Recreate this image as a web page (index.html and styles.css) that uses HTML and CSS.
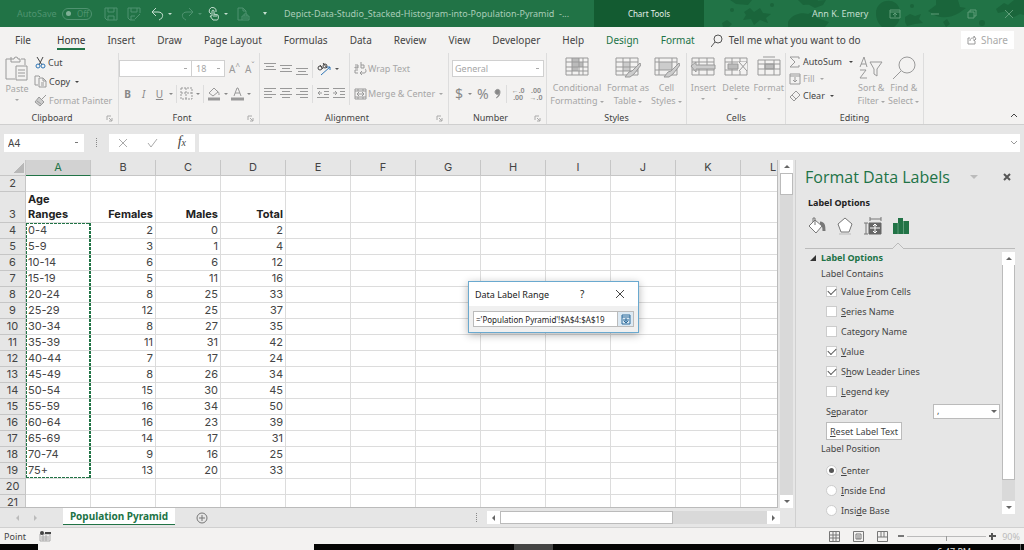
FILE: index.html
```html
<!DOCTYPE html>
<html lang="en">
<head>
<meta charset="utf-8">
<title>Depict-Data-Studio_Stacked-Histogram-into-Population-Pyramid</title>
<link rel="stylesheet" href="styles.css">
</head>
<body>
<div class="app">
  <header class="titlebar">
    <div class="quick">
      <span class="faint autosave">AutoSave</span>
      <span class="toggle"><i class="knob"></i>Off</span>
      <svg class="faint q1" width="14" height="14" viewBox="0 0 14 14"><path d="M1 1h12v12H3l-2-2zM4 1v4h6V1M4 13V9h6v4"/></svg>
      <svg class="faint q2" width="14" height="14" viewBox="0 0 14 14"><path d="M8 13H3l-2-2V1h12v5M4 1v4h6V1M4 13V9h4M8 12l5-5"/></svg>
      <svg class="lit q3" width="13" height="14" viewBox="0 0 13 14"><path d="M5 1 1 5l4 4M1 5h6c6 0 6 6 1 8"/></svg>
      <span class="caret lit"></span>
      <svg class="faint q4" width="13" height="14" viewBox="0 0 13 14"><path d="M8 1l4 4-4 4M12 5H6C0 5 0 11 5 13"/></svg>
      <span class="caret faint"></span>
      <svg class="lit q5" width="12" height="14" viewBox="0 0 12 14"><path d="M3 7a3.500 3.500 0 1 1 5-2M4 9V4c0-1 2-1 2 0v3l4 1c1 3 0 5-1 5H5L2 9h2M6 7v3M8 8v2"/></svg>
      <span class="caret lit"></span>
      <svg class="faint q6" width="13" height="14" viewBox="0 0 13 14"><path d="M5 13H1V1h5l3 3v3M6 1v3h3M5 9h7v4H5zM7 9V7h3v2M6 11h5"/></svg>
      <span class="caret bar lit"></span>
    </div>
    <div class="doc">Depict-Data-Studio_Stacked-Histogram-into-Population-Pyramid&nbsp; -...</div>
    <div class="tools">Chart Tools</div>
    <div class="account">
      <svg class="art" width="348" height="27" viewBox="0 0 348 27" aria-hidden="true">
        <g fill="#1a653b"><path d="M50 0h22l-4 5-12-1zM64 12l6-4 4 4 6-4 3 5 8 1-5 4 2 5-8-3-6 5-3-6-8 1 3-5zM108 22c4-8 14-10 20-8l6-3 3 7 12 4-4 5h-37zM118 0h20l-3 4-12 1zM124 2l22-2-3 5-8 3zM42 23l5-3 5 4-3 3h-6zM196 13c0-15 22-17 24-2 1 8-2 13-6 16h-12c-4-4-6-8-6-14zM225 17l5-3 5 2 6-2-2 5 4 4-8 1-8 2-2-4zM248 11l8-6 0-5h22l2 7 6 1-7 5c-8 5-20 6-26 1zM316 9l8-6 4 2 6-5h14v16l-8-2-8 4-5-7-9 2zM263 22l4-3 3 5-4 3z"/><circle cx="52" cy="10" r="2"/><circle cx="232" cy="6" r="2"/><circle cx="92" cy="5" r="2"/><circle cx="302" cy="23" r="3"/></g>
      </svg>
      <span class="user">Ann K. Emery</span>
      <svg class="w1" width="12" height="10" viewBox="0 0 12 10"><path d="M1 1h10v8H1zM1 3h10M6 8V4M4 6l2-2 2 2"/></svg>
      <svg class="w2" width="10" height="10" viewBox="0 0 10 10"><path d="M1 5h8"/></svg>
      <svg class="w3" width="10" height="10" viewBox="0 0 10 10"><path d="M1 3h6v6H1zM3 3V1h6v6H7"/></svg>
      <svg class="w4" width="10" height="10" viewBox="0 0 10 10"><path d="M1 1l8 8M9 1L1 9"/></svg>
    </div>
  </header>

  <nav class="tabs">
    <a href="#" class="tab file">File</a><a href="#" class="tab on">Home</a><a href="#" class="tab">Insert</a><a href="#" class="tab">Draw</a><a href="#" class="tab">Page Layout</a><a href="#" class="tab">Formulas</a><a href="#" class="tab">Data</a><a href="#" class="tab">Review</a><a href="#" class="tab">View</a><a href="#" class="tab">Developer</a><a href="#" class="tab">Help</a><a href="#" class="tab green">Design</a><a href="#" class="tab green">Format</a>
    <span class="tell"><svg width="12" height="13" viewBox="0 0 12 13"><circle cx="7" cy="5" r="4"/><path d="M4 8l-4 5"/></svg>Tell me what you want to do</span>
    <button class="share"><svg width="10" height="10" viewBox="0 0 10 10"><path d="M3 3H1v6h7V6M3 6c0-3 2-3 4-3V1l2 3-2 2V4"/></svg>Share</button>
  </nav>

  <section class="ribbon">
    <div class="group clipboard">
      <div class="body">
        <button class="big dim paste"><svg width="24" height="26" viewBox="0 0 24 26"><path d="M6 3H1v20h9M16 3h4v6M6 1v5h9V3h-2a2 2 0 0 0-4 0H6M11 10h11v14H11zM13 14h7M13 17h7M13 20h7"/></svg><span>Paste</span><i class="caret"></i></button>
        <div class="stack">
          <button class="small"><svg width="12" height="13" viewBox="0 0 12 13"><path d="M3 1l5 8M9 1L5 9" stroke="#444"/><g stroke="#2e75b6"><circle cx="4" cy="10" r="2"/><circle cx="9" cy="10" r="2"/></g></svg>Cut</button>
          <button class="small"><svg width="13" height="13" viewBox="0 0 13 13" stroke="#444"><path d="M4 10H1V1h4l1 1M5 3h4l3 3v6H5zM9 3v3h3M7 8h3M7 10h3"/></svg>Copy <i class="caret"></i></button>
          <button class="small dim"><svg width="13" height="13" viewBox="0 0 13 13"><path d="M12 1L8 5M5 3l5 5-4 4-5-4zM3 7l4 3" fill="#ccc"/></svg>Format Painter</button>
        </div>
      </div>
      <div class="label">Clipboard<svg class="launch" width="7" height="7" viewBox="0 0 7 7"><path d="M1 5V1h4M3 3l3 3M6 3v3H3"/></svg></div>
    </div>
    <div class="group font">
      <div class="body rows">
        <div class="row"><select class="box face" aria-label="Font"><option></option></select><select class="box size" aria-label="Font size"><option>18</option></select><button class="fs">A<sup>^</sup></button><button class="fs fs2">A<sup>ˇ</sup></button></div>
        <div class="row fmt"><button><b>B</b></button><button><em>I</em></button><button><u>U</u></button><i class="caret"></i><i class="sep"></i>
          <button><svg width="13" height="13" viewBox="0 0 13 13"><path d="M1 1h11v11H1zM6 1v11M1 6h11" stroke-dasharray="2 1"/></svg></button><i class="caret"></i><i class="sep"></i>
          <button><svg width="14" height="14" viewBox="0 0 14 14"><path d="M7 1L2 6l4 3 5-4-4-4M10 4c2 1 2 2 2 4"/><path d="M1 12h12" stroke-width="3"/></svg></button><i class="caret"></i>
          <button><svg width="13" height="14" viewBox="0 0 13 14"><path d="M3 9l3-8h1l3 8M4 6h5"/><path d="M0 12h13" stroke-width="3"/></svg></button><i class="caret"></i></div>
      </div>
      <div class="label">Font<svg class="launch" width="7" height="7" viewBox="0 0 7 7"><path d="M1 5V1h4M3 3l3 3M6 3v3H3"/></svg></div>
    </div>
    <div class="group align">
      <div class="body">
        <div class="rows alignl">
          <div class="row"><svg width="12" height="12" viewBox="0 0 12 12"><path d="M0 .5h12M2 3.500h8M0 6.500h12"/></svg><svg width="12" height="12" viewBox="0 0 12 12"><path d="M0 2.500h12M2 5.500h8M0 8.500h12"/></svg><svg width="12" height="12" viewBox="0 0 12 12"><path d="M0 5.500h12M2 8.500h8M0 11.500h12"/></svg><i class="sep"></i><svg width="14" height="14" viewBox="0 0 14 14"><g stroke="#444"><circle cx="3" cy="6" r="2"/><path d="M3 3l3 4M6 1l4 5"/><circle cx="8" cy="4" r="2"/></g><path d="M4 13l9-8M10 5h3v3" stroke="#2e75b6"/></svg><i class="caret dark"></i></div>
          <div class="row"><svg width="12" height="12" viewBox="0 0 12 12"><path d="M0 .5h12M0 3.500h8M0 6.500h12M0 9.500h8"/></svg><svg width="12" height="12" viewBox="0 0 12 12"><path d="M0 .5h12M2 3.500h8M0 6.500h12M2 9.500h8"/></svg><svg width="12" height="12" viewBox="0 0 12 12"><path d="M0 .5h12M4 3.500h8M0 6.500h12M4 9.500h8"/></svg><i class="sep"></i><svg width="12" height="12" viewBox="0 0 12 12"><path d="M0 .5h12M7 3.500h5M7 6.500h5M0 9.500h12M5 5H1M3 3L1 5l2 2"/></svg><svg width="12" height="12" viewBox="0 0 12 12"><path d="M0 .5h12M7 3.500h5M7 6.500h5M0 9.500h12M0 5h4M2 3l2 2-2 2"/></svg></div>
        </div>
        <div class="rows alignr">
          <button class="small dim"><svg width="13" height="13" viewBox="0 0 13 13"><path d="M1 3h3v3H1V5h3M7 0v6h3V3H7M4 8H1v3h3M7 11h3c3 0 2-4 1-4M8 9l-2 2 2 2"/></svg>Wrap Text</button>
          <button class="small dim"><svg width="13" height="12" viewBox="0 0 13 12"><path d="M1 1h11v10H1zM1 3h11M1 9h11M4 1v2M9 1v2M4 9v2M9 9v2M3 6h7M5 4L3 6l2 2M8 4l2 2-2 2"/></svg>Merge &amp; Center <i class="caret"></i></button>
        </div>
      </div>
      <div class="label">Alignment<svg class="launch" width="7" height="7" viewBox="0 0 7 7"><path d="M1 5V1h4M3 3l3 3M6 3v3H3"/></svg></div>
    </div>
    <div class="group number">
      <div class="body rows">
        <div class="row"><select class="box general" aria-label="Number format"><option>General</option></select></div>
        <div class="row sym"><button>$</button><i class="caret"></i><button>%</button><button class="comma"><svg width="7" height="11" viewBox="0 0 7 11"><path d="M2 10c3-1 4-4 4-6 0-4-5-3-5 0 0 2 2 3 4 2" fill="#888"/></svg></button><i class="sep"></i><button class="dec"><span>←.0</span><span>.00</span></button><button class="dec"><span>.00</span><span>→.0</span></button></div>
      </div>
      <div class="label">Number<svg class="launch" width="7" height="7" viewBox="0 0 7 7"><path d="M1 5V1h4M3 3l3 3M6 3v3H3"/></svg></div>
    </div>
    <div class="group styles">
      <div class="body">
        <button class="big dim s1"><svg width="24" height="22" viewBox="0 0 24 22"><path d="M7 2h7v4H7zM7 6h11v5H7zM7 11h6v4H7z" fill="#bbb" stroke="none"/><path d="M1 2h22v17H1zM7 2v17M14 2v17M18 2v17M1 6h22M1 11h22M1 15h22"/></svg><span>Conditional<br>Formatting <i class="caret"></i></span></button>
        <button class="big dim s2"><svg width="26" height="22" viewBox="0 0 26 22"><path d="M8 6h7v9H8z" fill="#ccc" stroke="none"/><path d="M1 2h22v17H1zM8 2v17M15 2v17M1 6h22M1 11h22M1 15h22"/><path d="M25 7l-8 8-3 1-4 5h5l4-3 7-9z" fill="#ccc"/></svg><span>Format as<br>Table <i class="caret"></i></span></button>
        <button class="big dim s3"><svg width="26" height="22" viewBox="0 0 26 22"><path d="M5 6h13v8H5z" fill="#ccc" stroke="none"/><path d="M1 2h22v17H1zM5 2v17M18 2v17M1 6h22M1 14h22"/><path d="M25 7l-8 8-3 1-4 5h5l4-3 7-9z" fill="#ccc"/></svg><span>Cell<br>Styles <i class="caret"></i></span></button>
      </div>
      <div class="label">Styles</div>
    </div>
    <div class="group cells">
      <div class="body">
        <button class="big dim"><svg width="26" height="22" viewBox="0 0 26 22"><path d="M2 2h22v17H2zM9 2v17M17 2v17M2 6h22M2 14h22"/><path d="M1 10l5-4v3h19v4H6v3z" fill="#ccc"/></svg><span>Insert</span><i class="caret"></i></button>
        <button class="big dim"><svg width="26" height="22" viewBox="0 0 26 22"><path d="M2 2h22v17H2zM9 2v17M17 2v17M2 6h22M2 14h22"/><path d="M15 6h9v9h-9z" fill="#f3f2f1" stroke="none"/><path d="M5 8h10v5H5z" fill="#bbb"/><path d="M16 6l8 9M24 6l-8 9"/></svg><span>Delete</span><i class="caret"></i></button>
        <button class="big dim"><svg width="24" height="22" viewBox="0 0 24 22"><path d="M8 8h9v5H8z" fill="#bbb"/><path d="M1 4h22v15H1zM8 4v15M17 4v15M1 8h22M1 13h22M6 1h12"/></svg><span>Format</span><i class="caret"></i></button>
      </div>
      <div class="label">Cells</div>
    </div>
    <div class="group editing">
      <div class="body">
        <div class="stack ed">
          <button class="small sum"><svg width="12" height="12" viewBox="0 0 12 12" stroke="#444"><path d="M10 3V1H1l5 5-5 5h9V9"/></svg>AutoSum <i class="caret"></i></button>
          <button class="small dim"><svg width="12" height="12" viewBox="0 0 12 12"><path d="M1 1h10v10H1zM1 3h10M6 4v5M4 7l2 2 2-2"/></svg>Fill <i class="caret"></i></button>
          <button class="small"><svg width="12" height="12" viewBox="0 0 12 12" stroke="#444"><path d="M1 7l6-6 4 4-6 6zM3 5l4 4"/></svg>Clear <i class="caret"></i></button>
        </div>
        <button class="big dim"><svg width="24" height="24" viewBox="0 0 24 24"><path d="M1 11l4-10 3 10M2 8h5M1 14h6l-6 8h7M11 6h12l-5 7v7l-3-2v-5z"/></svg><span>Sort &amp;<br>Filter <i class="caret"></i></span></button>
        <button class="big dim"><svg width="24" height="24" viewBox="0 0 24 24"><circle cx="15" cy="9" r="8"/><path d="M9 15l-8 8"/></svg><span>Find &amp;<br>Select <i class="caret"></i></span></button>
      </div>
      <div class="label">Editing</div>
    </div>
    <button class="collapse" aria-label="Collapse ribbon"><svg width="8" height="6" viewBox="0 0 8 6"><path d="M1 5l3-3 3 3" stroke="#444"/></svg></button>
  </section>

  <section class="formula">
    <select class="namebox" aria-label="Name box"><option>A4</option></select>
    <span class="dots"></span>
    <div class="fx"><svg width="10" height="10" viewBox="0 0 10 10"><path d="M1 1l8 8M9 1L1 9"/></svg><svg width="11" height="10" viewBox="0 0 11 10"><path d="M1 5l3 4 6-8"/></svg><span><em>f</em><small>x</small></span></div>
    <input class="fbar" aria-label="Formula bar">
    <svg class="expand" width="8" height="6" viewBox="0 0 8 6"><path d="M1 1l3 3 3-3"/></svg>
  </section>

  <main class="work">
    <div class="book">
      <div class="gridwrap">
        <div class="sheet"><table class="cellsheet" id="cells"></table></div>
        <div class="vbar"><i class="sb up"></i><i class="thumb"></i><i class="sb down"></i></div>
      </div>
      <div class="sheettabs">
        <span class="nav"><i class="tri l"></i><i class="tri r"></i></span>
        <a href="#" class="sheettab">Population Pyramid</a>
        <button class="add" aria-label="New sheet"><svg width="12" height="12" viewBox="0 0 12 12"><circle cx="6" cy="6" r="5"/><path d="M3 6h6M6 3v6"/></svg></button>
        <span class="dots"></span>
        <div class="hbar"><i class="sb left"></i><i class="thumb"></i><i class="sb right"></i></div>
      </div>
    </div>
    <aside class="pane">
      <div class="panehead"><h1>Format Data Labels</h1><i class="caret"></i><button aria-label="Close"><svg width="8" height="8" viewBox="0 0 8 8"><path d="M1 1l6 6M7 1L1 7" stroke="#555" stroke-width="2"/></svg></button></div>
      <h2>Label Options</h2>
      <div class="picks">
        <svg width="18" height="18" viewBox="0 0 18 18"><path d="M7 3l7 6-6 7-7-7z" fill="#fff"/><path d="M7 8V1H5v4"/><path d="M12 6c4 0 4 4 4 8" stroke-width="3"/></svg>
        <svg width="18" height="18" viewBox="0 0 18 18"><path d="M9 1l7 6-3 8H5L2 7z" fill="#fff"/><path d="M3 17h12" stroke="#bbb"/></svg>
        <svg width="18" height="18" viewBox="0 0 18 18"><path d="M6 2h11M6 0v4M17 0v4M2 6v11M0 6h4M0 17h4"/><path d="M5 6h12v11H5z" fill="#666" stroke="#666"/><path d="M11 7v9M6 11h10M9 9l2-2 2 2M9 14l2 2 2-2" stroke="#fff"/></svg>
        <svg width="18" height="18" viewBox="0 0 18 18"><path d="M1 6h5v11H1zM6 1h5v16H6zM12 4h5v13h-5z" fill="#217346" stroke="none"/><path d="M6 6v11M11.500 4v13" stroke="#5c9c78"/></svg>
      </div>
      <div class="rule"><svg width="12" height="7" viewBox="0 0 12 7"><path d="M0 7l6-6 6 6" fill="#e6e6e6" stroke="#bbb"/></svg></div>
      <div class="panebody">
        <form class="opts">
          <h3><svg width="6" height="6" viewBox="0 0 6 6"><path d="M6 0v6H0z" fill="#333" stroke="none"/></svg>Label Options</h3>
          <p>Label Contains</p>
          <label><input type="checkbox" checked><span>Value <u>F</u>rom Cells</span></label>
          <label><input type="checkbox"><span><u>S</u>eries Name</span></label>
          <label><input type="checkbox"><span>Cate<u>g</u>ory Name</span></label>
          <label><input type="checkbox" checked><span><u>V</u>alue</span></label>
          <label><input type="checkbox" checked><span>S<u>h</u>ow Leader Lines</span></label>
          <label><input type="checkbox"><span><u>L</u>egend key</span></label>
          <div class="sepline"><label for="sep">S<u>e</u>parator</label><span class="drop"><select id="sep"><option>,</option></select></span></div>
          <button type="button" class="reset"><u>R</u>eset Label Text</button>
          <p class="pos">Label Position</p>
          <label><input type="radio" name="pos" checked><span><u>C</u>enter</span></label>
          <label><input type="radio" name="pos"><span><u>I</u>nside End</span></label>
          <label><input type="radio" name="pos"><span>Insi<u>d</u>e Base</span></label>
        </form>
        <div class="vbar panebar"><i class="sb up"></i><i class="thumb"></i><i class="sb down"></i></div>
      </div>
    </aside>
    <div class="dialog" role="dialog" aria-label="Data Label Range">
      <div class="dhead"><span>Data Label Range</span><button class="q">?</button><button aria-label="Close"><svg width="10" height="10" viewBox="0 0 10 10"><path d="M1 1l8 8M9 1L1 9" stroke="#444"/></svg></button></div>
      <div class="dbody"><div class="field"><input aria-label="Range" value="='Population Pyramid'!$A$4:$A$19"><button aria-label="Expand dialog"><svg width="10" height="11" viewBox="0 0 10 11"><path d="M1 1h8v9H1zM1 3h8M5 4v5M3 7l2 2 2-2M2 6h6" stroke="#2b6a9b"/></svg></button></div></div>
    </div>
  </main>

  <footer class="status">
    <span>Point</span>
    <svg width="12" height="11" viewBox="0 0 12 11"><path d="M1 3h10v7H1zM2 6h8M2 8h8M4 4v6M7 4v6" stroke="#aaa"/><circle cx="3" cy="2" r="2" fill="#444" stroke="none"/><path d="M6 2h6" stroke="#444" stroke-width="2"/></svg>
    <span class="fill"></span>
    <svg width="11" height="11" viewBox="0 0 11 11"><path d="M.5.5h10v10H.5zM4 1v9M7 1v9M1 4h9M1 7h9"/></svg>
    <svg width="11" height="11" viewBox="0 0 11 11"><path d="M.5.5h10v10H.5zM3 3h5v5H3zM4 5h3M4 7h3"/></svg>
    <svg width="11" height="11" viewBox="0 0 11 11"><path d="M.5.5h10v10H.5zM4 1v5M7 1v5M1 6h9"/></svg>
    <span class="zoomer"><i class="minus"></i><i class="track"><i class="knob"></i></i><svg width="7" height="7" viewBox="0 0 7 7"><path d="M0 3h7M3 0v7" stroke="#555" stroke-width="2"/></svg></span>
    <span class="pct">90%</span>
  </footer>
  <div class="taskbar"><span class="start"></span><span class="search"></span><span class="gap"></span><span class="active"></span><span class="clock">6:47 PM</span><span class="peek"></span></div>
</div>
<script src="sheet.js"></script>
</body>
</html>
```
FILE: styles.css
```css
* { box-sizing: border-box; }
body { margin: 0; font-family: "Noto Sans", "Open Sans", sans-serif; font-size: 9px; color: #444; background: #e6e6e6; }
.app { display: flex; flex-direction: column; height: 100vh; overflow: hidden; }
svg { fill: none; stroke: #999; flex: none; }
button { border: 0; padding: 0; background: none; font: inherit; color: inherit; }
input, select { font: inherit; color: inherit; border-radius: 0; }
select { appearance: none; }
a { color: inherit; text-decoration: none; }
.caret { display: inline-block; flex: none; border: 2px solid transparent; border-top-color: currentColor; border-bottom: 0; vertical-align: middle; }
.sep { width: 1px; height: 18px; background: #ddd; }

/* Title bar */
.titlebar { display: flex; height: 27px; flex: none; background: #217346; color: #a9cdb8; align-items: center; }
.quick { width: 284px; display: flex; align-items: center; padding-left: 17px; }
.quick .faint, .quick .toggle { color: #4f9370; stroke: #4f9370; }
.quick .lit { color: #c5dfd0; stroke: #c5dfd0; }
.autosave { width: 45px; }
.toggle { display: flex; align-items: center; gap: 6px; width: 30px; height: 12px; border: 1px solid #4f9370; border-radius: 6px; padding-left: 3px; line-height: 10px; font-size: 8px; }
.toggle .knob { width: 5px; height: 5px; border-radius: 50%; background: #7fb096; }
.q1 { margin-left: 12px; }
.q2 { margin-left: 9px; }
.q3 { margin: 0 4px 0 10px; }
.q4 { margin: 0 4px 0 9px; }
.q5 { margin: 0 4px 0 6px; }
.q6 { margin: 0 13px 0 9px; }
.bar { border-top-width: 3px; }
.doc { flex: 1; white-space: nowrap; }
.tools { width: 110px; align-self: stretch; background: #135b31; color: #e4f0e9; display: grid; place-items: center; font-size: 8px; }
.account { position: relative; width: 320px; align-self: stretch; display: flex; align-items: center; overflow: hidden; padding-left: 108px; }
.account > * { position: relative; }
.account .art { position: absolute; left: -24px; top: 0; }
.account svg { stroke: #5f9d79; }
.account .art { stroke: none; }
.user { width: 77px; color: #c5dfd0; white-space: nowrap; }
.w2 { margin-left: 29px; }
.w3 { margin-left: 27px; }
.w4 { margin-left: 27px; }

/* Ribbon tabs */
.tabs { display: flex; flex: none; height: 26px; background: #f3f2f1; padding-left: 15px; font-size: 10px; align-items: center; gap: 22px; white-space: nowrap; }
.tab { line-height: 15px; }
.file { margin-right: 4px; }
.on { box-shadow: 0 2px #217346; color: #333; }
.green { color: #217346; }
.tell { display: flex; gap: 6px; align-items: center; margin-left: -6px; }
.tell svg { stroke: #555; }
.share { margin-left: auto; margin-right: 10px; width: 53px; height: 18px; background: #fff; color: #aaa; display: flex; align-items: center; justify-content: center; gap: 4px; }

/* Ribbon */
.ribbon { display: flex; flex: none; height: 72px; background: #f3f2f1; border-bottom: 1px solid #cfcfcf; }
.group { display: flex; flex-direction: column; border-right: 1px solid #ddd; flex: none; }
.clipboard { width: 119px; }
.font { width: 141px; }
.align { width: 189px; }
.number { width: 98px; }
.styles { width: 140px; }
.cells { width: 99px; }
.editing { width: 138px; }
.body { display: flex; height: 57px; }
.label { position: relative; line-height: 16px; height: 14px; padding-right: 14px; text-align: center; }
.styles .label, .cells .label, .editing .label { padding-right: 0; }
.launch { position: absolute; right: 5px; top: 5px; stroke: #aaa; }
.dim { color: #a6a6a6; }
.big { display: flex; flex-direction: column; align-items: center; line-height: 13px; padding-top: 3px; white-space: nowrap; }
.big svg { margin-bottom: 3px; }
.editing .big svg { margin-bottom: 1px; }
.big > .caret { margin-top: 4px; }
.paste { width: 34px; }
.clipboard .paste svg { margin-bottom: 0; }
.stack { display: flex; flex-direction: column; height: 57px; }
.small { display: flex; align-items: center; gap: 2px; flex: 1; white-space: nowrap; }
.small .caret { margin-left: 3px; }
.rows { display: flex; flex-direction: column; padding-top: 3px; }
.row, .alignr .small { display: flex; align-items: center; height: 25px; flex: none; }
.box { border: 1px solid #d0d0d0; height: 17px; background: #fff linear-gradient(#aaa, #aaa) no-repeat right 4px center / 3px 1px; padding: 0 4px; color: #a6a6a6; }
.face { width: 72px; border-right: 0; }
.size { width: 34px; }
.fs { margin-left: 4px; color: #999; line-height: 12px; font-size: 10px; }
.fs2 { margin-left: 5px; }
.fs sup { font-size: 8px; line-height: 0; }
.fmt { gap: 3px; color: #888; padding-left: 2px; font-size: 10px; }
.fmt button { min-width: 13px; display: grid; place-items: center; }
.align .row { gap: 4px; }
.alignl { flex: none; width: 90px; padding-left: 4px; border-right: 1px solid #ddd; height: 52px; }
.alignr { padding-left: 4px; }
.alignr .small { gap: 1px; }
.dark { color: #555; }
.number .body { padding-left: 3px; }
.general { width: 92px; padding: 0 2px; }
.sym { gap: 5px; font-size: 14px; color: #888; padding-left: 3px; }
.dec { display: flex; flex-direction: column; font-size: 7px; line-height: 7px; font-weight: 600; }
.styles .s1 { width: 60px; }
.styles .s2 { width: 42px; }
.styles .s3 { width: 35px; }
.cells .big, .editing .big { flex: 1; }
.editing .body { padding-right: 3px; }
.ed { width: 69px; padding: 0 0 6px 3px; }
.sum .caret { margin-left: auto; margin-right: 2px; }
.collapse { margin: auto 6px 3px auto; }

/* Formula bar */
.formula { display: flex; flex: none; height: 35px; align-items: center; padding: 0 4px; }
.namebox { width: 80px; height: 18px; border: 0; background: #fff linear-gradient(#777, #777) no-repeat right 6px center / 3px 1px; padding: 0 4px; font-size: 10px; }
.dots { width: 1px; height: 9px; border-left: 1px dotted #888; margin: 0 12px; }
.fx { width: 86px; height: 18px; background: #fff; display: flex; align-items: center; justify-content: space-between; padding: 0 9px; }
.fx svg { stroke: #aaa; }
.fx span { font: 14px/16px "Liberation Serif", serif; }
.fx small { font-size: 10px; font-style: italic; }
.fbar { flex: 1; min-width: 0; margin-left: 4px; height: 18px; border: 0; background: #fff; }
.expand { margin: 0 2px 0 -10px; z-index: 1; }

/* Worksheet */
.work { position: relative; display: flex; flex: 1; min-height: 0; }
.book { flex: 1; min-width: 0; display: flex; flex-direction: column; }
.gridwrap { display: flex; flex: 1; min-height: 0; }
.sheet { flex: 1; min-width: 0; overflow: hidden; background: #fff; border-right: 1px solid #bbb; border-bottom: 1px solid #bbb; }
.cellsheet { border-collapse: separate; border-spacing: 0; table-layout: fixed; width: 806px; font-family: Inter, "Liberation Sans", sans-serif; font-size: 11px; line-height: 15px; }
.cellsheet th, .cellsheet td { height: 16px; padding: 0 2px; border-right: 1px solid #dcdcdc; border-bottom: 1px solid #dcdcdc; text-align: right; vertical-align: bottom; white-space: nowrap; }
.cellsheet th { background: #e6e6e6; font-weight: 400; text-align: center; border-color: #c6c6c6; padding: 0; }
.cellsheet td.first { text-align: left; }
.cellsheet td.head { font-weight: 700; color: #222; white-space: normal; }
.cellsheet col.num { width: 26px; }
.cellsheet th.sel { background: #d2d2d2; color: #217346; border-bottom-color: #217346; }
.cellsheet td.march {
  --v: repeating-linear-gradient(#217346 0 3px, transparent 3px 4px);
  --h: repeating-linear-gradient(90deg, #217346 0 3px, transparent 3px 4px);
  border-right: 0;
  background: var(--v) no-repeat left top / 1px 100%, var(--v) no-repeat right top / 2px 100%;
}
.cellsheet td.top { background: var(--v) no-repeat left top / 1px 100%, var(--v) no-repeat right top / 2px 100%, var(--h) no-repeat left top / 100% 1px; }
.cellsheet td.last { background: var(--v) no-repeat left top / 1px 100%, var(--v) no-repeat right top / 2px 100%, var(--h) no-repeat left bottom / 100% 1px; }
.cellsheet th.corner { background: linear-gradient(135deg, transparent 50%, #b8b8b8 50%) no-repeat 13px 3px / 11px 10px, #e6e6e6; }
.vbar { width: 17px; display: flex; flex-direction: column; align-items: center; background: linear-gradient(#d9d9d9, #d9d9d9) no-repeat center / 13px 100%; }
.vbar .thumb { width: 13px; height: 22px; flex: none; background: #fff; border: 1px solid #bbb; }
.sb { display: grid; place-items: center; width: 13px; height: 13px; background: #fff; flex: none; }
.sb::after { content: ""; border: 3px solid transparent; }
.up::after { border-bottom-color: #666; border-top: 0; }
.down { margin-top: auto; }
.down::after { border-top-color: #666; border-bottom: 0; }
.left::after { border-right-color: #666; border-left: 0; }
.right { margin-left: auto; }
.right::after { border-left-color: #666; border-right: 0; }
.sheettabs { display: flex; height: 19px; flex: none; align-items: center; }
.nav { width: 63px; display: flex; gap: 15px; padding-left: 16px; }
.tri { border: 3px solid transparent; }
.tri.l { border-right-color: #bbb; border-left: 0; }
.tri.r { border-left-color: #bbb; border-right: 0; }
.sheettab { width: 112px; height: 17px; align-self: flex-start; line-height: 16px; text-align: center; background: #fff; color: #217346; font-size: 10px; font-weight: 700; border-bottom: 1px solid #217346; white-space: nowrap; }
.add { margin-left: 21px; display: flex; }
.add svg { stroke: #777; }
.sheettabs .dots { margin: 0 10px 0 auto; }
.hbar { width: 293px; height: 13px; margin-right: 15px; background: #d9d9d9; display: flex; }
.hbar .thumb { width: 173px; background: #fff; border: 1px solid #bbb; }

/* Format pane */
.pane { width: 229px; flex: none; border-left: 1px solid #d0d0d0; padding-left: 9px; display: flex; flex-direction: column; }
.panehead { display: flex; align-items: center; height: 34px; }
h1 { font-family: "Open Sans", "Noto Sans", sans-serif; font-size: 16px; font-weight: 400; color: #217346; margin: 0; width: 165px; white-space: nowrap; }
.panehead .caret { border-width: 4px 4px 0; color: #bbb; }
.panehead button { margin: 0 13px 0 auto; }
h2 { font-size: 9px; line-height: 14px; margin: 2px 3px; color: #222; }
.picks { display: flex; gap: 10px; padding: 5px 3px 7px; }
.picks svg { stroke: #777; }
.rule { height: 7px; margin-right: 9px; border-bottom: 1px solid #bbb; padding-left: 87px; line-height: 0; }
.panebody { display: flex; flex: 1; min-height: 0; margin-right: 9px; }
.panebar { width: 13px; margin: 3px 0 13px auto; }
.panebar .thumb { height: 215px; border-top: 0; }
.opts { width: 195px; padding-top: 1px; }
h3 { display: flex; align-items: center; gap: 5px; margin: 0 0 0 5px; font-size: 9px; line-height: 16px; color: #217346; }
.opts p { margin: 0 16px; line-height: 16px; }
.opts > label { display: flex; align-items: center; gap: 4px; height: 20px; margin-left: 21px; }
.opts p + label { margin-top: -1px; }
.opts .pos { margin-bottom: 4px; }
.opts input { appearance: none; margin: 0; width: 11px; height: 11px; background: #fff; border: 1px solid #ccc; display: grid; place-items: center; }
.opts input[type=checkbox]:checked::after { content: ""; width: 7px; height: 4px; border: solid #555; border-width: 0 0 1px 1px; rotate: -45deg; margin-bottom: 2px; }
.opts input[type=radio] { border-radius: 50%; }
.opts input[type=radio]:checked::after { content: ""; width: 5px; height: 5px; border-radius: 50%; background: #555; }
.sepline { display: flex; justify-content: space-between; align-items: center; height: 20px; margin-left: 21px; }
.drop { position: relative; display: flex; }
.drop::after { content: ""; position: absolute; right: 3px; top: 6px; border: 3px solid transparent; border-top-color: #666; border-bottom: 0; pointer-events: none; }
.drop select { width: 67px; height: 15px; border: 1px solid #bbb; background: #fff; line-height: 12px; padding: 0 3px; }
.reset { display: block; margin: 1px 0 1px 21px; width: 76px; height: 18px; border: 1px solid #bbb; background: #fff; white-space: nowrap; }

/* Range dialog */
.dialog { position: absolute; left: 468px; top: 121px; width: 171px; height: 52px; border: 1px solid #6aa9cf; background: #f0f0f0; box-shadow: 0 2px 8px rgba(0, 0, 0, .3); color: #222; }
.dhead { display: flex; align-items: center; height: 24px; background: #fff; padding: 0 13px 0 6px; }
.dhead span { width: 105px; }
.q { font-size: 10px; }
.dhead button:last-child { margin-left: auto; display: flex; }
.dbody { padding: 5px 4px; }
.field { display: flex; height: 16px; border: 1px solid #bbb; background: #fff; }
.field input { flex: 1; min-width: 0; border: 0; padding: 0 2px; background: none; font-size: 8px; }
.field button { width: 16px; background: #dce9f3; border-left: 1px solid #bbb; display: grid; place-items: center; }

/* Status bar and taskbar */
.status { display: flex; flex: none; height: 17px; align-items: center; background: #f3f2f1; border-top: 1px solid #d0d0d0; padding: 0 4px; gap: 13px; }
.status svg { stroke: #777; }
.fill { flex: 1; }
.zoomer { display: flex; align-items: center; gap: 3px; margin-left: -3px; }
.minus { width: 6px; height: 2px; background: #777; }
.track { width: 79px; height: 1px; background: #bbb; display: grid; place-items: center; }
.track .knob { width: 1px; height: 5px; background: #999; }
.pct { color: #bbb; margin-left: -7px; }
.taskbar { display: flex; height: 6px; flex: none; background: #050505; overflow: hidden; }
.start { width: 38px; }
.search { width: 276px; background: #f3f2f1; }
.gap { width: 200px; }
.active { width: 39px; background: #444; }
.clock { margin: 3px 49px 0 auto; color: #ddd; line-height: 10px; }
.peek { width: 4px; border-left: 1px solid #666; }
```
FILE: sheet.js
```js
const rows = [
  ["0-4", 2, 0, 2], ["5-9", 3, 1, 4], ["10-14", 6, 6, 12], ["15-19", 5, 11, 16],
  ["20-24", 8, 25, 33], ["25-29", 12, 25, 37], ["30-34", 8, 27, 35], ["35-39", 11, 31, 42],
  ["40-44", 7, 17, 24], ["45-49", 8, 26, 34], ["50-54", 15, 30, 45], ["55-59", 16, 34, 50],
  ["60-64", 16, 23, 39], ["65-69", 14, 17, 31], ["70-74", 9, 16, 25], ["75+", 13, 20, 33]
];
const blanks = n => "<td></td>".repeat(n);
let html = '<colgroup><col class="num"></colgroup><tr><th class="corner"></th>';
for (const c of "ABCDEFGHIJKL") html += `<th class="${c === "A" ? "sel" : ""}">${c}</th>`;
html += `</tr><tr><th>2</th>${blanks(12)}</tr>`;
html += `<tr><th>3</th><td class="first head">Age<br>Ranges</td><td class="head">Females</td><td class="head">Males</td><td class="head">Total</td>${blanks(8)}</tr>`;
rows.forEach((r, i) => {
  const edge = i === 0 ? "top" : i === rows.length - 1 ? "last" : "";
  html += `<tr><th>${i + 4}</th><td class="first march ${edge}">${r[0]}</td>`;
  html += r.slice(1).map(v => `<td>${v}</td>`).join("") + blanks(8) + "</tr>";
});
html += `<tr><th>20</th>${blanks(12)}</tr><tr><th>21</th>${blanks(12)}</tr>`;
document.getElementById("cells").innerHTML = html;
```
